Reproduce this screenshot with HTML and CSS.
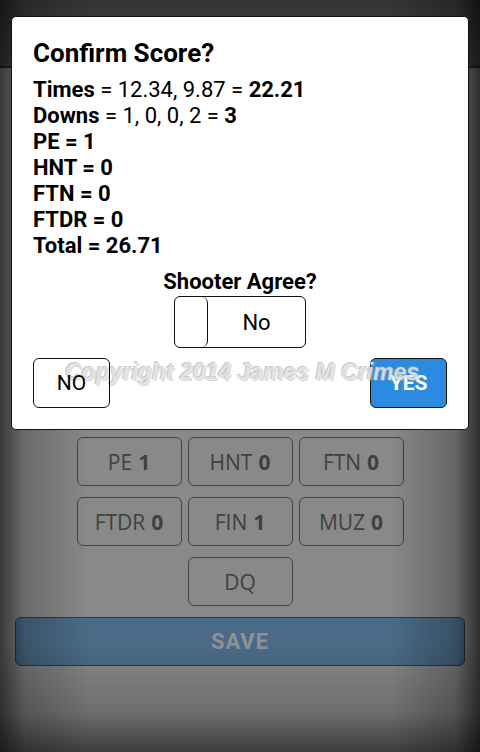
FILE: index.html
```html
<!DOCTYPE html>
<html>
<head>
<meta charset="utf-8">
<title>Confirm Score</title>
<link rel="stylesheet" href="styles.css">
</head>
<body>
<div class="app">
  <header class="topbar"></header>
  <main class="content">
    <div class="grid">
      <button class="pen">PE <b>1</b></button>
      <button class="pen">HNT <b>0</b></button>
      <button class="pen">FTN <b>0</b></button>
      <button class="pen">FTDR <b>0</b></button>
      <button class="pen">FIN <b>1</b></button>
      <button class="pen">MUZ <b>0</b></button>
      <button class="pen dq">DQ</button>
    </div>
    <button class="save">SAVE</button>
  </main>
</div>
<div class="vignette"></div>
<div class="dialog">
  <h1 class="title">Confirm Score?</h1>
  <div class="summary">
    <div><b>Times</b> = 12.34, 9.87 = <b>22.21</b></div>
    <div><b>Downs</b> = 1, 0, 0, 2 = <b>3</b></div>
    <div><b>PE = 1</b></div>
    <div><b>HNT = 0</b></div>
    <div><b>FTN = 0</b></div>
    <div><b>FTDR = 0</b></div>
    <div><b>Total = 26.71</b></div>
  </div>
  <div class="agree">Shooter Agree?</div>
  <div class="toggle">
    <span class="knob"></span>
    <span class="toggle-label">No</span>
  </div>
  <div class="actions">
    <button class="btn btn-no">NO</button>
    <button class="btn btn-yes">YES</button>
  </div>
  <div class="watermark">Copyright 2014 James M Crimes</div>
</div>
</body>
</html>
```
FILE: styles.css
```css
* { box-sizing: border-box; }
html, body { margin: 0; padding: 0; }
body {
  width: 480px;
  height: 752px;
  overflow: hidden;
  position: relative;
  background: #898989;
  font-family: Roboto, "Open Sans", sans-serif;
}
.app { height: 100%; }
.topbar {
  height: 68px;
  background: #4e4e4e;
  border-bottom: 2px solid #2e2e2e;
}
.content {
  padding: 369px 15px 0;
  display: flex;
  flex-direction: column;
  align-items: center;
  gap: 11px;
}
.grid {
  display: grid;
  grid-template-columns: repeat(3, 105px);
  column-gap: 6px;
  row-gap: 11px;
}
.pen {
  height: 49px;
  border: 1px solid #444;
  border-radius: 6px;
  background: transparent;
  font-family: "Open Sans", sans-serif;
  font-size: 21px;
  color: #404040;
  padding: 0;
  display: flex;
  align-items: center;
  justify-content: center;
}
.pen b { font-weight: 700; margin-left: 6px; }
.dq { grid-column: 2; }
.save {
  width: 450px;
  height: 49px;
  background: #4a6b87;
  border: 1px solid #2f3a45;
  border-radius: 6px;
  color: #8f9295;
  font-family: Roboto, sans-serif;
  font-weight: 700;
  font-size: 22px;
  letter-spacing: 1px;
  padding: 0;
}
.vignette {
  position: absolute;
  inset: 0;
  pointer-events: none;
  background:
    linear-gradient(to right, rgba(0,0,0,.58), rgba(0,0,0,.22) 25px, rgba(0,0,0,0) 90px),
    linear-gradient(to left, rgba(0,0,0,.65), rgba(0,0,0,.25) 25px, rgba(0,0,0,0) 90px),
    linear-gradient(to bottom, rgba(0,0,0,.35), rgba(0,0,0,0) 80px),
    linear-gradient(to top, rgba(0,0,0,.55), rgba(0,0,0,.2) 40px, rgba(0,0,0,0) 110px);
}
.dialog {
  position: absolute;
  top: 16px;
  left: 11px;
  width: 458px;
  height: 414px;
  background: #fff;
  border: 1px solid #111;
  border-radius: 5px;
  padding: 21px 21px 0;
  color: #000;
}
.title {
  font-family: Roboto, sans-serif;
  font-weight: 700;
  font-size: 26px;
  line-height: 30px;
  margin: 0 0 9px;
}
.summary {
  font-size: 22px;
  line-height: 26px;
}
.summary b { font-weight: 700; }
.agree {
  margin-top: 10px;
  text-align: center;
  font-weight: 700;
  font-size: 22px;
  line-height: 26px;
}
.toggle {
  margin: 1px auto 0;
  width: 132px;
  height: 52px;
  border: 1px solid #111;
  border-radius: 6px;
  display: flex;
}
.knob {
  width: 33px;
  border-right: 1px solid #111;
  border-radius: 0 6px 6px 0;
}
.toggle-label {
  flex: 1;
  display: flex;
  align-items: center;
  justify-content: center;
  font-size: 22px;
}
.actions {
  margin-top: 10px;
  display: flex;
  justify-content: space-between;
}
.btn {
  width: 77px;
  height: 50px;
  border: 1px solid #111;
  border-radius: 6px;
  font-family: Roboto, sans-serif;
  font-size: 21px;
  padding: 0;
}
.btn-no {
  background: transparent;
  color: #000;
  position: relative;
  z-index: 2;
}
.btn-yes {
  background: #2b8be0;
  color: #fff;
  font-weight: 700;
}
.watermark {
  position: absolute;
  top: 344px;
  left: 53px;
  z-index: 1;
  font-family: "Liberation Sans", Arial, sans-serif;
  font-style: italic;
  font-weight: 700;
  font-size: 23px;
  line-height: 23px;
  white-space: nowrap;
  color: rgba(238,238,238,.75);
  text-shadow: -1px -1px 0 rgba(150,150,150,.55), 1px 1px 0 rgba(180,180,180,.5);
  pointer-events: none;
}
```
